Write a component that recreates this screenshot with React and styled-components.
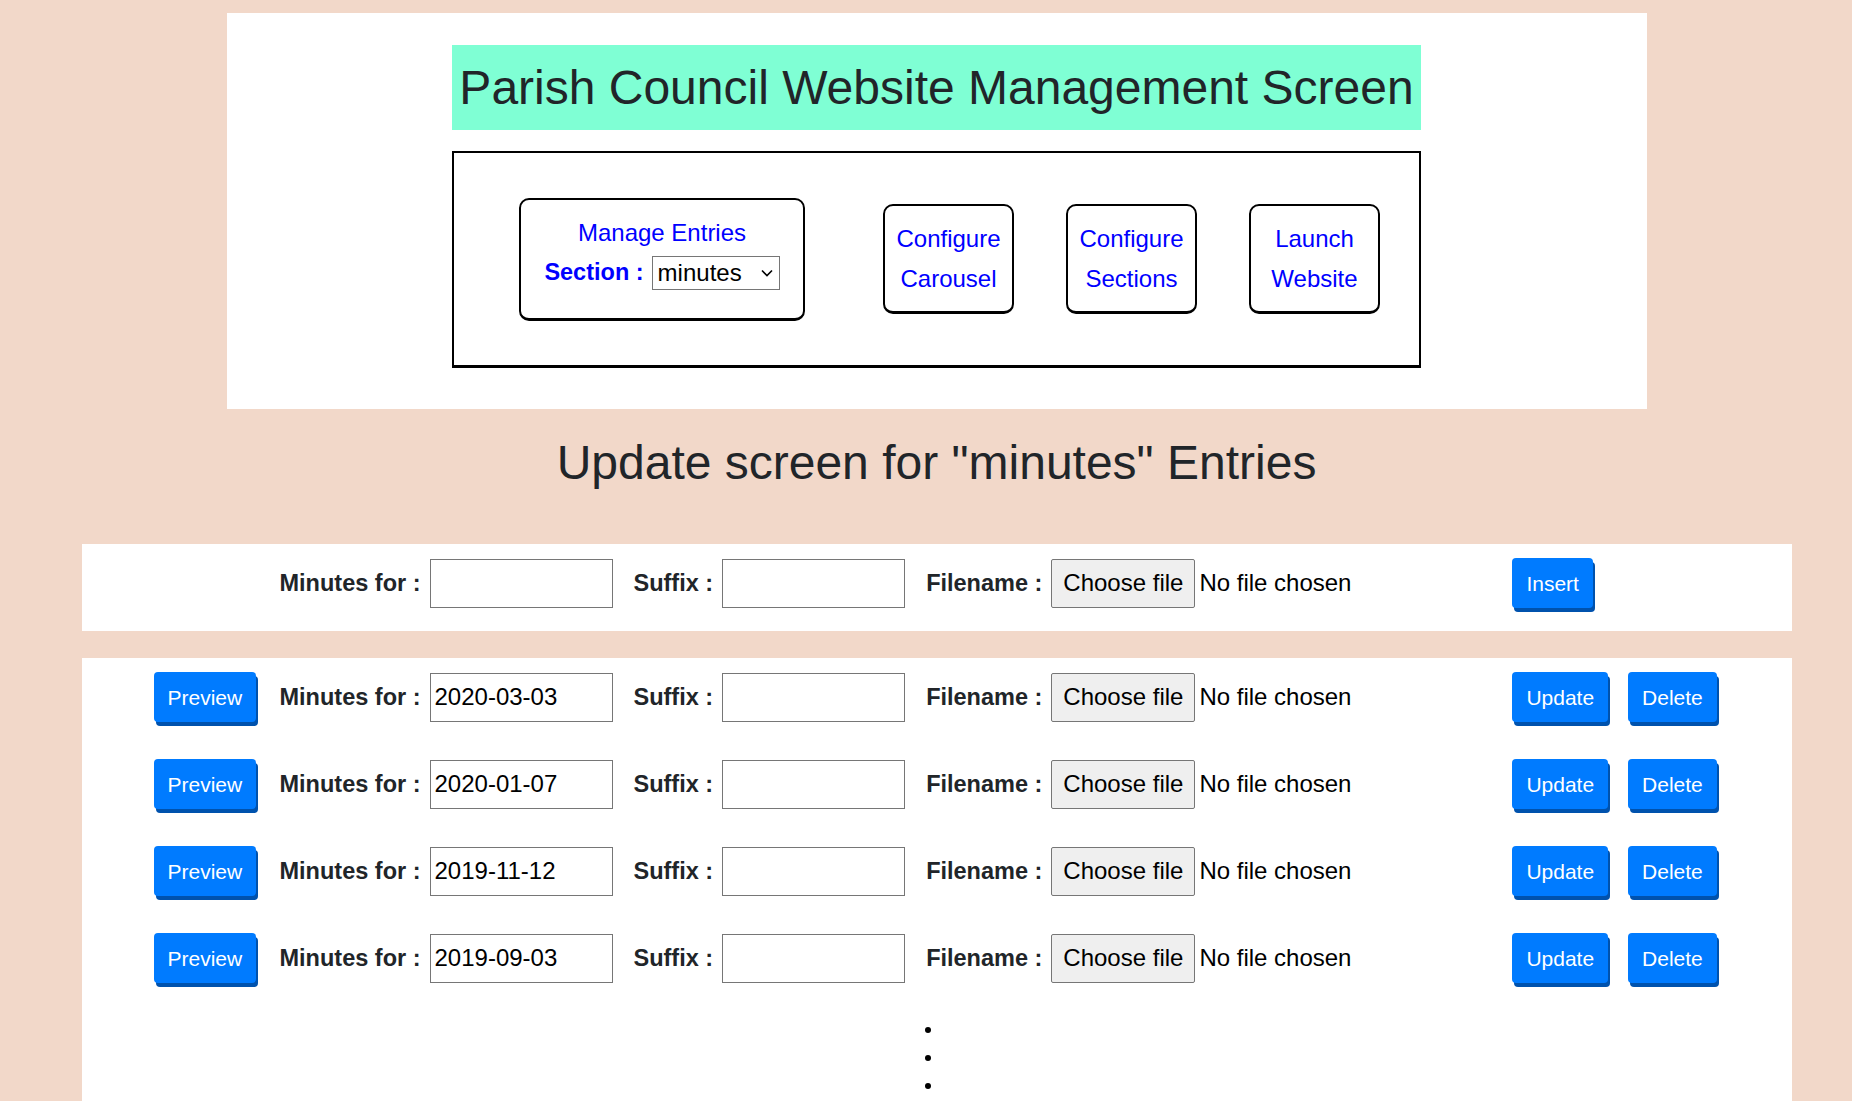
import styled, { createGlobalStyle } from "styled-components";

const GlobalStyle = createGlobalStyle`
  html, body {
    margin: 0;
    padding: 0;
  }
  body {
    background: #f2d8c9;
    font-family: "Liberation Sans", Arial, sans-serif;
    color: #212529;
  }
`;

const entries = ["2020-03-03", "2020-01-07", "2019-11-12", "2019-09-03"];

const navLinks = [
  ["Configure", "Carousel"],
  ["Configure", "Sections"],
  ["Launch", "Website"],
];

const EntryRow = ({ date, insert }) => (
  <Row>
    <PreviewSlot>{!insert && <BlueButton>Preview</BlueButton>}</PreviewSlot>
    <FieldLabel>Minutes for :</FieldLabel>
    <TextInput defaultValue={date || ""} />
    <FieldLabel>Suffix :</FieldLabel>
    <TextInput defaultValue="" $last />
    <FieldLabel>Filename :</FieldLabel>
    <ChooseFile>Choose file</ChooseFile>
    <FileStatus>No file chosen</FileStatus>
    {insert ? (
      <BlueButton>Insert</BlueButton>
    ) : (
      <>
        <BlueButton>Update</BlueButton>
        <BlueButton $spaced>Delete</BlueButton>
      </>
    )}
  </Row>
);

export default function App() {
  return (
    <>
      <GlobalStyle />
      <Page>
        <HeaderPanel>
          <Heading>Parish Council Website Management Screen</Heading>
          <Nav>
            <ManageBox>
              <NavText>Manage Entries</NavText>
              <SectionRow>
                <SectionLabel>Section :</SectionLabel>
                <SelectWrap>
                  <Select defaultValue="minutes">
                    <option value="minutes">minutes</option>
                    <option value="agendas">agendas</option>
                    <option value="news">news</option>
                  </Select>
                  <Chevron width="12" height="8" viewBox="0 0 12 8">
                    <path d="M1 1.5 L6 6.5 L11 1.5" fill="none" stroke="#000" strokeWidth="1.6" />
                  </Chevron>
                </SelectWrap>
              </SectionRow>
            </ManageBox>
            {navLinks.map(([a, b]) => (
              <NavButton key={b}>
                <NavText>{a}</NavText>
                <NavText>{b}</NavText>
              </NavButton>
            ))}
          </Nav>
        </HeaderPanel>

        <PageTitle>Update screen for "minutes" Entries</PageTitle>

        <Panel>
          <EntryRow insert />
        </Panel>

        <Panel $list>
          <List>
            {entries.map((d) => (
              <EntryRow key={d} date={d} />
            ))}
          </List>
          <More>
            <Dot />
            <Dot />
            <Dot />
          </More>
        </Panel>
      </Page>
    </>
  );
}

const Page = styled.div`
  padding: 13px 0 0 21px;
  min-height: 1101px;
  box-sizing: border-box;
`;

const HeaderPanel = styled.div`
  width: 1420px;
  margin: 0 auto;
  background: #fff;
  padding: 32px 0 41px;
  display: flex;
  flex-direction: column;
  align-items: center;
`;

const Heading = styled.h1`
  margin: 0;
  width: 969px;
  box-sizing: border-box;
  background: #7fffd4;
  padding: 14px 0;
  font-size: 48px;
  font-weight: 400;
  line-height: 57px;
  text-align: center;
  color: #212529;
  white-space: nowrap;
`;

const Nav = styled.div`
  margin-top: 21px;
  width: 969px;
  height: 217px;
  box-sizing: border-box;
  border: 2px solid #000;
  border-bottom-width: 3px;
  display: flex;
  align-items: center;
  gap: 52px;
  padding-left: 65px;
`;

const ManageBox = styled.div`
  width: 286px;
  height: 123px;
  box-sizing: border-box;
  border: 2px solid #000;
  border-bottom-width: 3px;
  border-radius: 10px;
  padding-top: 13px;
  margin-right: 26px;
  display: flex;
  flex-direction: column;
  align-items: center;
`;

const NavButton = styled.div`
  width: 131px;
  height: 110px;
  box-sizing: border-box;
  border: 2px solid #000;
  border-bottom-width: 3px;
  border-radius: 10px;
  display: flex;
  flex-direction: column;
  align-items: center;
  justify-content: center;
  cursor: pointer;
`;

const NavText = styled.a`
  font-size: 24px;
  line-height: 40px;
  color: #0000ff;
  white-space: nowrap;
  cursor: pointer;
`;

const SectionRow = styled.div`
  height: 40px;
  display: flex;
  align-items: center;
  gap: 8px;
`;

const SectionLabel = styled.span`
  font-size: 23.5px;
  font-weight: 700;
  color: #0000ff;
`;

const SelectWrap = styled.div`
  position: relative;
  display: flex;
`;

const Select = styled.select`
  appearance: none;
  width: 128px;
  height: 34px;
  box-sizing: border-box;
  border: 1px solid #767676;
  border-radius: 0;
  background: #fff;
  padding: 0 0 0 5px;
  font-family: "Liberation Sans", Arial, sans-serif;
  font-size: 24px;
  color: #000;
`;

const Chevron = styled.svg`
  position: absolute;
  right: 7px;
  top: 13px;
  pointer-events: none;
`;

const PageTitle = styled.h2`
  margin: 25px 0 0;
  font-size: 48px;
  font-weight: 400;
  line-height: 58px;
  text-align: center;
  color: #212529;
`;

const Panel = styled.div`
  width: 1710px;
  margin: ${(p) => (p.$list ? "27px" : "52px")} auto 0;
  background: #fff;
  box-sizing: border-box;
  padding: 14px 0 ${(p) => (p.$list ? "20px" : "23px")} 72px;
`;

const List = styled.div`
  display: flex;
  flex-direction: column;
  gap: 37px;
`;

const Row = styled.div`
  height: 50px;
  display: flex;
  align-items: center;
`;

const PreviewSlot = styled.div`
  width: 126px;
  flex-shrink: 0;
`;

const BlueButton = styled.button`
  height: 50px;
  padding: 0 14px;
  margin-left: ${(p) => (p.$spaced ? "20px" : "0")};
  background: #007bff;
  color: #fff;
  border: none;
  border-radius: 4px;
  box-shadow: 2px 4px 0 #0052ad;
  font-family: "Liberation Sans", Arial, sans-serif;
  font-size: 21px;
  line-height: 1;
  cursor: pointer;
`;

const FieldLabel = styled.label`
  font-size: 23.5px;
  font-weight: 700;
  margin-right: 9px;
  white-space: nowrap;
  color: #212529;
`;

const TextInput = styled.input`
  width: 183px;
  height: 49px;
  box-sizing: border-box;
  border: 1px solid #767676;
  padding: 0 4px;
  margin-right: ${(p) => (p.$last ? "21px" : "21px")};
  font-family: "Liberation Sans", Arial, sans-serif;
  font-size: 24px;
  color: #000;
  flex-shrink: 0;
`;

const ChooseFile = styled.span`
  width: 144px;
  height: 49px;
  box-sizing: border-box;
  border: 1px solid #767676;
  border-radius: 2px;
  background: #efefef;
  display: flex;
  align-items: center;
  justify-content: center;
  font-size: 24px;
  color: #000;
  margin-right: 4px;
  flex-shrink: 0;
  cursor: pointer;
`;

const FileStatus = styled.span`
  width: 313px;
  flex-shrink: 0;
  font-size: 24px;
  color: #000;
  white-space: nowrap;
`;

const More = styled.div`
  margin-top: 44px;
  padding-right: 89px;
  display: flex;
  flex-direction: column;
  align-items: center;
  gap: 22px;
`;

const Dot = styled.span`
  width: 6px;
  height: 6px;
  border-radius: 50%;
  background: #000;
`;
